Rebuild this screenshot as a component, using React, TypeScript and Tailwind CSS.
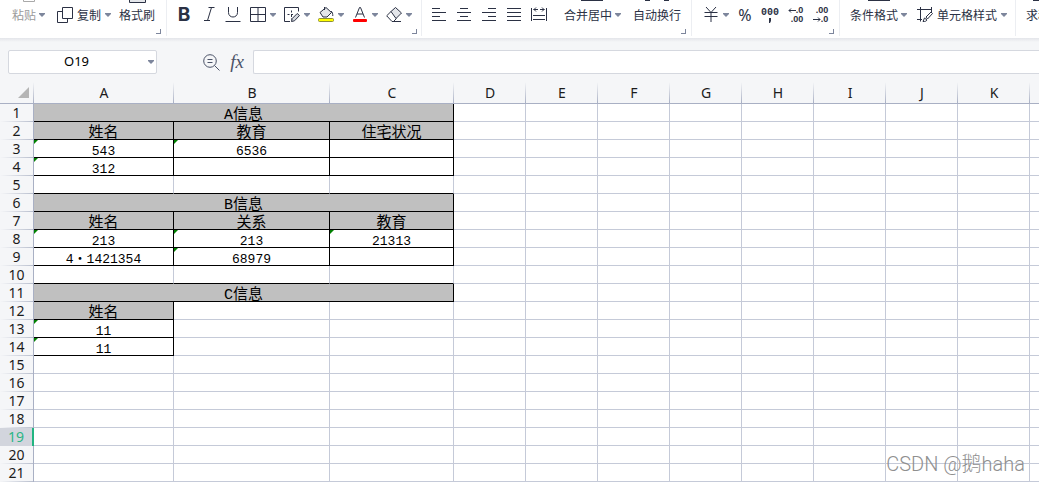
import React from "react";
import clsx from "clsx";

type Cell = {
  text?: string;
  span?: number;
  filled?: boolean;
  boxed?: boolean;
  underlined?: boolean;
  marked?: boolean;
};

const columns = ["A", "B", "C", "D", "E", "F", "G", "H", "I", "J", "K", ""];
const rowCount = 21;
const activeRow = 19;

const title = (text: string): Cell => ({ text, span: 3, filled: true, boxed: true });
const head = (text: string): Cell => ({ text, filled: true, boxed: true });
const value = (text = "", marked = false): Cell => ({ text, marked, boxed: true });
const spacer: Cell[] = [{ underlined: true }, { underlined: true }, { underlined: true }];

const sheet: Record<number, Cell[]> = {
  1: [title("A信息")],
  2: [head("姓名"), head("教育"), head("住宅状况")],
  3: [value("543", true), value("6536", true), value()],
  4: [value("312", true), value(), value()],
  5: spacer,
  6: [title("B信息")],
  7: [head("姓名"), head("关系"), head("教育")],
  8: [value("213", true), value("213", true), value("21313", true)],
  9: [value("4・1421354"), value("68979", true), value()],
  10: spacer,
  11: [title("C信息")],
  12: [head("姓名")],
  13: [value("11", true)],
  14: [value("11", true)],
};

const Caret = () => (
  <svg className="h-1 w-1.5 shrink-0" viewBox="0 0 6 4" fill="#7d869c">
    <path d="M0 0h6v1L3 4 0 1z" />
  </svg>
);

const Icon = ({ children, className }: { children: React.ReactNode; className?: string }) => (
  <svg
    className={clsx("h-4 w-4 shrink-0", className)}
    viewBox="0 0 16 16"
    fill="none"
    stroke="#2b3144"
    strokeWidth="1"
  >
    {children}
  </svg>
);

const Tool = ({
  label,
  caret,
  className,
  children,
}: {
  label: string;
  caret?: boolean;
  className?: string;
  children: React.ReactNode;
}) => (
  <button
    type="button"
    aria-label={label}
    className={clsx("flex h-[30px] shrink-0 items-center gap-1 whitespace-nowrap", className)}
  >
    {children}
    {caret && <Caret />}
  </button>
);

const TallTool = ({
  label,
  caret,
  muted,
  foot,
}: {
  label: string;
  caret?: boolean;
  muted?: boolean;
  foot: React.ReactNode;
}) => (
  <button
    type="button"
    className={clsx(
      "flex h-[30px] shrink-0 flex-col items-center whitespace-nowrap",
      muted && "text-[#9b9b9b]"
    )}
  >
    <svg className="h-[3px] w-6" viewBox="0 0 24 3" fill="none" stroke="#2b3144">
      {foot}
    </svg>
    <span className="flex h-6 items-center gap-[3px]">
      {label}
      {caret && <Caret />}
    </span>
  </button>
);

const Group = ({
  children,
  launcher,
  className,
}: {
  children: React.ReactNode;
  launcher?: boolean;
  className?: string;
}) => (
  <div className={clsx("flex h-9 shrink-0 items-start border-r border-[#eceef2]", className)}>
    {children}
    {launcher && (
      <button
        type="button"
        aria-label="更多设置"
        className="mr-[5px] mb-0.5 ml-auto h-[5px] w-[5px] shrink-0 self-end border-r border-b border-[#7d869c]"
      />
    )}
  </div>
);

const AlignIcon = ({ lines }: { lines: string }) => (
  <Icon>
    <path d={lines} />
  </Icon>
);

const Toolbar = () => (
  <div className="flex h-[38px] overflow-hidden bg-white text-[12px] text-[#2b3144]">
    <Group launcher className="w-[167px] pl-3">
      <TallTool label="粘贴" caret muted foot={<path d="M6.5 0v1.5h11V0" stroke="#a9a9a9" />} />
      <Tool label="复制" caret className="ml-3">
        <Icon>
          <path d="M5.5.5h10v11h-10zM5.5 4.5h-5v11h10v-4" />
        </Icon>
        复制
      </Tool>
      <div className="ml-2">
        <TallTool label="格式刷" foot={<path d="M4.5 0v2.5h16V0" fill="#e4e6ea" />} />
      </div>
    </Group>

    <Group launcher className="w-[255px] pl-[9px]">
      <Tool label="加粗" className="w-4 justify-center font-['Inter'] text-[19px] font-bold">
        B
      </Tool>
      <Tool label="倾斜" className="ml-[9px]">
        <Icon>
          <path d="M7.5.5h6M3 13.5h6M10.5.5l-4 13" />
        </Icon>
      </Tool>
      <Tool label="下划线" className="ml-2">
        <Icon>
          <path d="M3.5 0v5.5c0 6 9 6 9 0V0M.5 14.5h15" />
        </Icon>
      </Tool>
      <Tool label="边框" caret className="ml-[9px]">
        <Icon>
          <path d="M.5.5h15v14H.5zM8 .5v14M.5 7.5h15" />
        </Icon>
      </Tool>
      <Tool label="绘制边框" caret className="ml-2">
        <Icon>
          <path d="M6 14.5H.5V.5h14v4M3.5 7.5h2M7 7.5h2M7.5 3.5v2M7.5 7v3M7.5 11.5v1" />
          <path d="m7.5 14.5.7-3 5-5 2.3 2-5 5.3z" fill="#d5d8df" />
        </Icon>
      </Tool>
      <Tool label="填充颜色" caret className="ml-2">
        <Icon>
          <path d="m2 5.500 6-5 5.500 5-4.500 4.500H5z" fill="#e4e6ea" />
          <path d="M6.500 3V0M13 4c1.500 1 1.800 3 1.800 5" />
          <rect x=".5" y="11.5" width="15" height="3" rx="1" fill="#ff0" stroke="#8c8c3a" />
        </Icon>
      </Tool>
      <Tool label="字体颜色" caret className="ml-2">
        <Icon>
          <path d="m3.5 10.5 4-10h1l4 10M5 7h6" />
          <rect x="1" y="12" width="14" height="3" rx="1" fill="#f00" stroke="none" />
        </Icon>
      </Tool>
      <Tool label="清除" caret className="ml-2">
        <Icon>
          <path d="m5 4.500 4.500-4 6 5.500-5.500 5.500z" fill="#e4e6ea" />
          <path d="M5 4.500.7 8.800 6 14.500h1.500l3-3M6 14.500h9" />
        </Icon>
      </Tool>
    </Group>

    <Group launcher className="w-[270px] pl-[9px]">
      <div className="flex gap-[9px]">
        <Tool label="左对齐">
          <AlignIcon lines="M1 1.5h8M1 5.5h14M1 9.5h8M1 13.5h14" />
        </Tool>
        <Tool label="居中">
          <AlignIcon lines="M4 1.5h8M1 5.5h14M4 9.5h8M1 13.5h14" />
        </Tool>
        <Tool label="右对齐">
          <AlignIcon lines="M7 1.5h8M1 5.5h14M7 9.5h8M1 13.5h14" />
        </Tool>
        <Tool label="两端对齐">
          <AlignIcon lines="M1 1.5h14M1 5.5h14M1 9.5h14M1 13.5h14" />
        </Tool>
        <Tool label="分散对齐">
          <AlignIcon lines="M.5 1v13M15.5 1v13M2.5 2.5H7M9 2.5h4.5M5 .5l-2 2 2 2M11 .5l2 2-2 2M2 8.5h12M2 12.5h12" />
        </Tool>
      </div>
      <div className="ml-[17px] flex gap-3">
        <TallTool label="合并居中" caret foot={<path d="M0 .5h22" />} />
        <TallTool label="自动换行" foot={<path d="M0 .5h5M19 .5h5" />} />
      </div>
    </Group>

    <Group launcher className="w-[148px] pl-[11px]">
      <Tool label="货币" caret>
        <Icon>
          <path d="m3 0 5 5.5L13 0M8 5.5V15M1.5 5.5h13M1.5 9.5h13" />
        </Icon>
      </Tool>
      <Tool label="百分比" className="ml-2 w-4 justify-center font-['Noto_Sans'] text-[16px]">
        %
      </Tool>
      <Tool label="千位分隔" className="ml-2 w-[18px] justify-center">
        <span className="flex flex-col items-center font-['Liberation_Mono'] text-[10px] leading-[10px] font-bold">
          000
          <svg className="h-[5px] w-1" viewBox="0 0 4 5" fill="#2b3144">
            <path d="M1 0h2v3L2 5H1z" />
          </svg>
        </span>
      </Tool>
      <Tool label="增加小数位" className="ml-2 w-[17px] justify-center">
        <span className="flex flex-col items-end font-['Liberation_Sans'] text-[9px] leading-[9px] font-bold">
          <span className="flex items-center">
            <svg className="h-[5px] w-2" viewBox="0 0 8 5" fill="none" stroke="#2b3144">
              <path d="M8 2.5H1M3 .5l-2 2 2 2" />
            </svg>
            .0
          </span>
          <span>.00</span>
        </span>
      </Tool>
      <Tool label="减少小数位" className="ml-2 w-[17px] justify-center">
        <span className="flex flex-col items-end font-['Liberation_Sans'] text-[9px] leading-[9px] font-bold">
          <span>.00</span>
          <span className="flex items-center">
            <svg className="h-[5px] w-2" viewBox="0 0 8 5" fill="none" stroke="#2b3144">
              <path d="M0 2.5h7M5 .5l2 2-2 2" />
            </svg>
            .0
          </span>
        </span>
      </Tool>
    </Group>

    <Group className="w-[176px] pl-[10px]">
      <TallTool label="条件格式" caret foot={<path d="M1 .5h22" />} />
      <Tool label="单元格样式" caret className="ml-[10px]">
        <Icon>
          <path d="M0 2.5h14.5V5M3.5 0v14.5M0 12.5h5M14.5 0v3" />
          <path d="m6 14.5 1.5-3.5 2.5 2c-1 1.5-2 1.5-4 1.5zM9 10l5-5 1.5 1.5-5 5.5z" />
        </Icon>
        单元格样式
      </Tool>
    </Group>

    <Group className="pl-[10px]">
      <TallTool label="求和" foot={<path d="M7 .5h17" />} />
    </Group>
  </div>
);

const FormulaBar = () => (
  <div className="flex h-11 items-start bg-[linear-gradient(#e3e5ea,#f5f6f8_4px)] pt-3">
    <div className="ml-2 flex h-6 w-[149px] shrink-0 items-center rounded-[2px] border border-[#d5d8df] bg-white pr-0.5">
      <input
        aria-label="名称框"
        defaultValue="O19"
        className="w-full min-w-0 pr-1 text-center font-['Noto_Sans'] text-[13px] text-black outline-none"
      />
      <button type="button" aria-label="选择名称">
        <Caret />
      </button>
    </div>
    <button type="button" aria-label="查找" className="ml-[46px] flex h-6 items-center">
      <svg className="h-[17px] w-[17px]" viewBox="0 0 17 17" fill="none" stroke="#4b5368">
        <circle cx="7" cy="7" r="6.3" />
        <path d="m11.5 11.5 5 5M4.5 5.5h5M4.5 8.5h5" />
      </svg>
    </button>
    <button
      type="button"
      aria-label="插入函数"
      className="ml-2 flex h-6 w-[18px] items-center justify-center font-['Liberation_Serif'] text-[19px] text-[#4b5368] italic"
    >
      fx
    </button>
    <input
      aria-label="编辑栏"
      className="ml-[7px] h-6 min-w-0 flex-1 rounded-l-[2px] border border-r-0 border-[#d5d8df] bg-white px-2 outline-none"
    />
  </div>
);

const SheetCell = ({ cell }: { cell: Cell }) => (
  <td
    colSpan={cell.span}
    className={clsx(
      "relative border-r border-b p-0 text-center text-black last:border-r-0",
      cell.filled && "bg-[#c0c0c0]",
      cell.boxed ? "border-r-black" : "border-r-[#c5cad8]",
      cell.boxed || cell.underlined ? "border-b-black" : "border-b-[#c5cad8]"
    )}
  >
    {cell.marked && (
      <svg className="absolute top-0 left-0 h-1 w-1" viewBox="0 0 4 4" fill="#008000">
        <path d="M0 0h4L0 4z" />
      </svg>
    )}
    <div
      className={clsx(
        "h-[17px] font-['Liberation_Mono','Noto_Sans_CJK_SC',monospace] leading-6 whitespace-nowrap",
        cell.filled ? "text-[15px]" : "text-[13px]"
      )}
    >
      {cell.text}
    </div>
  </td>
);

const Sheet = () => (
  <table className="w-full min-w-[1039px] table-fixed border-separate border-spacing-0 bg-white">
    <colgroup>
      <col className="w-[34px]" />
      <col className="w-[140px]" />
      <col className="w-[156px]" />
      <col className="w-[124px]" />
      {columns.slice(3, 11).map((name) => (
        <col key={name} className="w-[72px]" />
      ))}
      <col />
    </colgroup>
    <thead className="bg-[#f5f6f8] font-['Noto_Sans'] text-[14px] text-[#1c1c1c]">
      <tr>
        <th
          aria-label="全选"
          className="h-[22px] border-b border-[#a9b0c4] bg-[linear-gradient(#f5f6f8,#a9b0c4)] bg-[size:1px_100%] bg-right bg-no-repeat p-0 pr-[5px]"
        >
          <svg className="ml-auto h-[11px] w-[11px]" viewBox="0 0 11 11" fill="#b5b5b5">
            <path d="M11 0v11H0z" />
          </svg>
        </th>
        {columns.map((name, i) => (
          <th
            key={i}
            scope="col"
            className="h-[22px] border-b border-[#a9b0c4] bg-[linear-gradient(#f5f6f8,#a9b0c4)] bg-[size:1px_100%] bg-right bg-no-repeat p-0 leading-[21px] font-normal last:bg-none"
          >
            <div className="h-[21px]">{name}</div>
          </th>
        ))}
      </tr>
    </thead>
    <tbody>
      {Array.from({ length: rowCount }, (_, i) => i + 1).map((row) => {
        const cells = sheet[row] ?? [];
        const used = cells.reduce((sum, cell) => sum + (cell.span ?? 1), 0);
        const active = row === activeRow;

        return (
          <tr key={row}>
            <th
              scope="row"
              className={clsx(
                "h-[18px] bg-[size:100%_1px] bg-bottom bg-no-repeat p-0 font-['Noto_Sans'] text-[14px] leading-[17px] font-normal",
                active
                  ? "border-r-2 border-[#21b581] bg-[#d2d5dd] text-[#2bb585]"
                  : "border-r border-[#a9b0c4] bg-[#f5f6f8] bg-[linear-gradient(90deg,#f5f6f8,#b9bfce)] text-[#1c1c1c]"
              )}
            >
              <div className="h-[18px]">{row}</div>
            </th>
            {cells.map((cell, n) => (
              <SheetCell key={n} cell={cell} />
            ))}
            {columns.slice(used).map((_, n) => (
              <SheetCell key={`empty-${n}`} cell={{}} />
            ))}
          </tr>
        );
      })}
    </tbody>
  </table>
);

const App = () => {
  return (
    <main className="relative overflow-hidden bg-[#f5f6f8] font-['Noto_Sans_CJK_SC',sans-serif]">
      <Toolbar />
      <FormulaBar />
      <Sheet />
      <p className="absolute right-3.5 bottom-1.5 font-['Roboto','Noto_Sans_CJK_SC',sans-serif] text-[20px] leading-6 font-light text-[#8f8f8f]">
        CSDN @鹅haha
      </p>
    </main>
  );
};

export default App;
